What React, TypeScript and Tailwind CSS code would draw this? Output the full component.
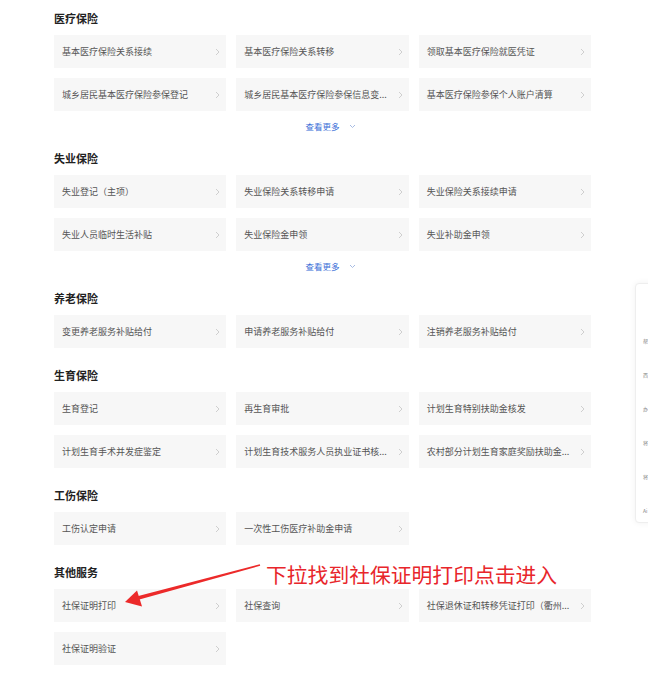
import React from 'react';

type Section = {
  title: string;
  items: string[];
  more?: boolean;
};

const sections: Section[] = [
  {
    title: '医疗保险',
    items: [
      '基本医疗保险关系接续',
      '基本医疗保险关系转移',
      '领取基本医疗保险就医凭证',
      '城乡居民基本医疗保险参保登记',
      '城乡居民基本医疗保险参保信息变...',
      '基本医疗保险参保个人账户清算',
    ],
    more: true,
  },
  {
    title: '失业保险',
    items: [
      '失业登记（主项）',
      '失业保险关系转移申请',
      '失业保险关系接续申请',
      '失业人员临时生活补贴',
      '失业保险金申领',
      '失业补助金申领',
    ],
    more: true,
  },
  {
    title: '养老保险',
    items: ['变更养老服务补贴给付', '申请养老服务补贴给付', '注销养老服务补贴给付'],
  },
  {
    title: '生育保险',
    items: [
      '生育登记',
      '再生育审批',
      '计划生育特别扶助金核发',
      '计划生育手术并发症鉴定',
      '计划生育技术服务人员执业证书核...',
      '农村部分计划生育家庭奖励扶助金...',
    ],
  },
  {
    title: '工伤保险',
    items: ['工伤认定申请', '一次性工伤医疗补助金申请'],
  },
  {
    title: '其他服务',
    items: ['社保证明打印', '社保查询', '社保退休证和转移凭证打印（衢州...', '社保证明验证'],
  },
];

const sideItems = ['帮', '西', '办', '将', '将', 'Ai'];

const Chevron = () => (
  <svg width="5" height="8" viewBox="0 0 5 8" className="shrink-0">
    <polyline points="1,1 4,4 1,7" fill="none" stroke="#c9c9c9" strokeWidth="0.9" />
  </svg>
);

const ServiceCard: React.FC<{ label: string }> = ({ label }) => (
  <div className="flex h-[33px] items-center justify-between bg-[#f7f7f7] pl-[8px] pr-[6px]">
    <span className="whitespace-nowrap text-[9px] leading-none text-[#555]">{label}</span>
    <Chevron />
  </div>
);

const App: React.FC = () => {
  return (
    <div
      className="relative min-h-[675px] w-full overflow-hidden bg-white"
      style={{ fontFamily: '"Noto Sans CJK SC", "Noto Sans", sans-serif' }}
    >
      <div className="flex w-[591px] flex-col gap-[20px] pl-[54px] pt-[11px]">
        {sections.map((s) => (
          <section key={s.title} className="flex flex-col">
            <h2 className="mb-[10px] text-[11px] font-bold leading-[14px] text-[#222]">{s.title}</h2>
            <div className="grid grid-cols-3 gap-x-[10px] gap-y-[10px]">
              {s.items.map((item) => (
                <ServiceCard key={item} label={item} />
              ))}
            </div>
            {s.more && (
              <div className="mt-[10px] flex h-[10px] items-center justify-center gap-[9px] pl-[16px]">
                <span className="text-[8.5px] leading-none text-[#3a6fd8]">查看更多</span>
                <svg width="7" height="5" viewBox="0 0 7 5">
                  <polyline points="1,1 3.5,3.5 6,1" fill="none" stroke="#9db3e0" strokeWidth="0.9" />
                </svg>
              </div>
            )}
          </section>
        ))}
      </div>

      {/* floating side toolbar, cut off at the right edge */}
      <div className="absolute left-[635px] top-[283px] flex h-[240px] w-[40px] flex-col gap-[22px] rounded-l-[4px] border border-[#eee] bg-white pl-[7px] pt-[51px] shadow-[0_0_6px_rgba(0,0,0,0.06)]">
        {sideItems.map((c, i) => (
          <span key={i} className="h-[12px] shrink-0 whitespace-nowrap text-[5px] leading-[12px] text-[#888]">
            {c}
          </span>
        ))}
      </div>

      {/* annotation */}
      <div className="absolute left-[266px] top-[561px] whitespace-nowrap text-[20.8px] leading-[26px] text-[#e8262b]">
        下拉找到社保证明打印点击进入
      </div>
      <svg className="pointer-events-none absolute left-0 top-0" width="648" height="675" viewBox="0 0 648 675">
        <polygon points="138.5,599.8 137.4,596.2 259.8,564.3 260.2,565.7" fill="#ec2a2a" />
        <polygon points="125,602 137,590.5 142,606.5" fill="#ec2a2a" />
      </svg>
    </div>
  );
};

export default App;
